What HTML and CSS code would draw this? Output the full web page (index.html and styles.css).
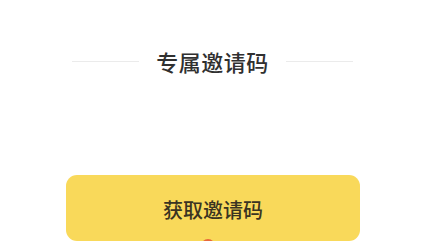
FILE: index.html
```html
<!DOCTYPE html>
<html lang="zh-CN">
<head>
<meta charset="utf-8">
<link rel="stylesheet" href="styles.css">
</head>
<body>
<div class="page">
  <div class="heading">
    <span class="rule"></span>
    <span class="title">专属邀请码</span>
    <span class="rule"></span>
  </div>
  <div class="btn-wrap">
    <button class="btn">获取邀请码</button>
    <span class="dot"></span>
  </div>
</div>
</body>
</html>
```
FILE: styles.css
```css
html, body {
  margin: 0;
  padding: 0;
  background: #ffffff;
  overflow: hidden;
}
body {
  width: 422px;
  height: 241px;
  font-family: "Noto Sans CJK SC", "Noto Sans", sans-serif;
}
.page {
  display: flex;
  flex-direction: column;
  align-items: flex-start;
}
.heading {
  margin-top: 48px;
  margin-left: 72px;
  width: 281px;
  height: 26px;
  display: flex;
  align-items: center;
  gap: 17px;
}
.rule {
  flex: 1;
  height: 1px;
  background: #ebebeb;
}
.title {
  font-size: 22px;
  line-height: 26px;
  font-weight: 500;
  color: #303030;
  letter-spacing: 0.5px;
}
.btn-wrap {
  position: relative;
  margin-top: 101px;
  margin-left: 66px;
}
.btn {
  display: block;
  width: 294px;
  height: 66px;
  border: none;
  border-radius: 11px;
  background: #f9d95a;
  color: #3a3422;
  font-family: "Noto Sans CJK SC", "Noto Sans", sans-serif;
  font-size: 20px;
  font-weight: 500;
  padding: 0;
  padding-top: 2px;
}
.dot {
  position: absolute;
  left: 135px;
  top: 64px;
  width: 14px;
  height: 14px;
  border-radius: 50%;
  background: #e8683a;
}
```
